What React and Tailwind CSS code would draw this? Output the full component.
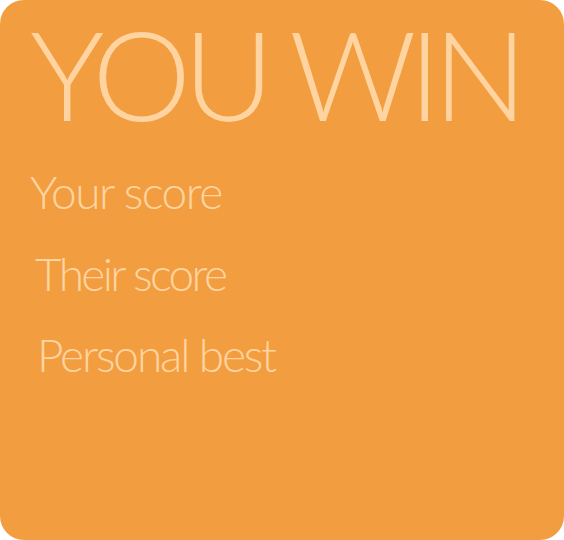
export default function App() {
  return (
    <div className="w-[564px] h-[540px] bg-white">
      <div className="w-full h-full rounded-[24px] bg-[#f29e40] text-[#ffd4a0] font-['Lato','Liberation_Sans',sans-serif] font-light overflow-hidden">
        <div className="pl-[30px] pt-[11px] text-[125px] leading-[125px] tracking-[-8px] whitespace-nowrap">YOU WIN</div>
        <div className="flex flex-col mt-[15px]">
          <div className="pl-[30px] text-[46px] leading-[82px] tracking-[-1.5px] whitespace-nowrap">Your score</div>
          <div className="pl-[35px] text-[46px] leading-[82px] tracking-[-2.6px] whitespace-nowrap">Their score</div>
          <div className="pl-[37px] text-[46px] leading-[80px] tracking-[-2.1px] whitespace-nowrap">Personal best</div>
        </div>
      </div>
    </div>
  );
}
